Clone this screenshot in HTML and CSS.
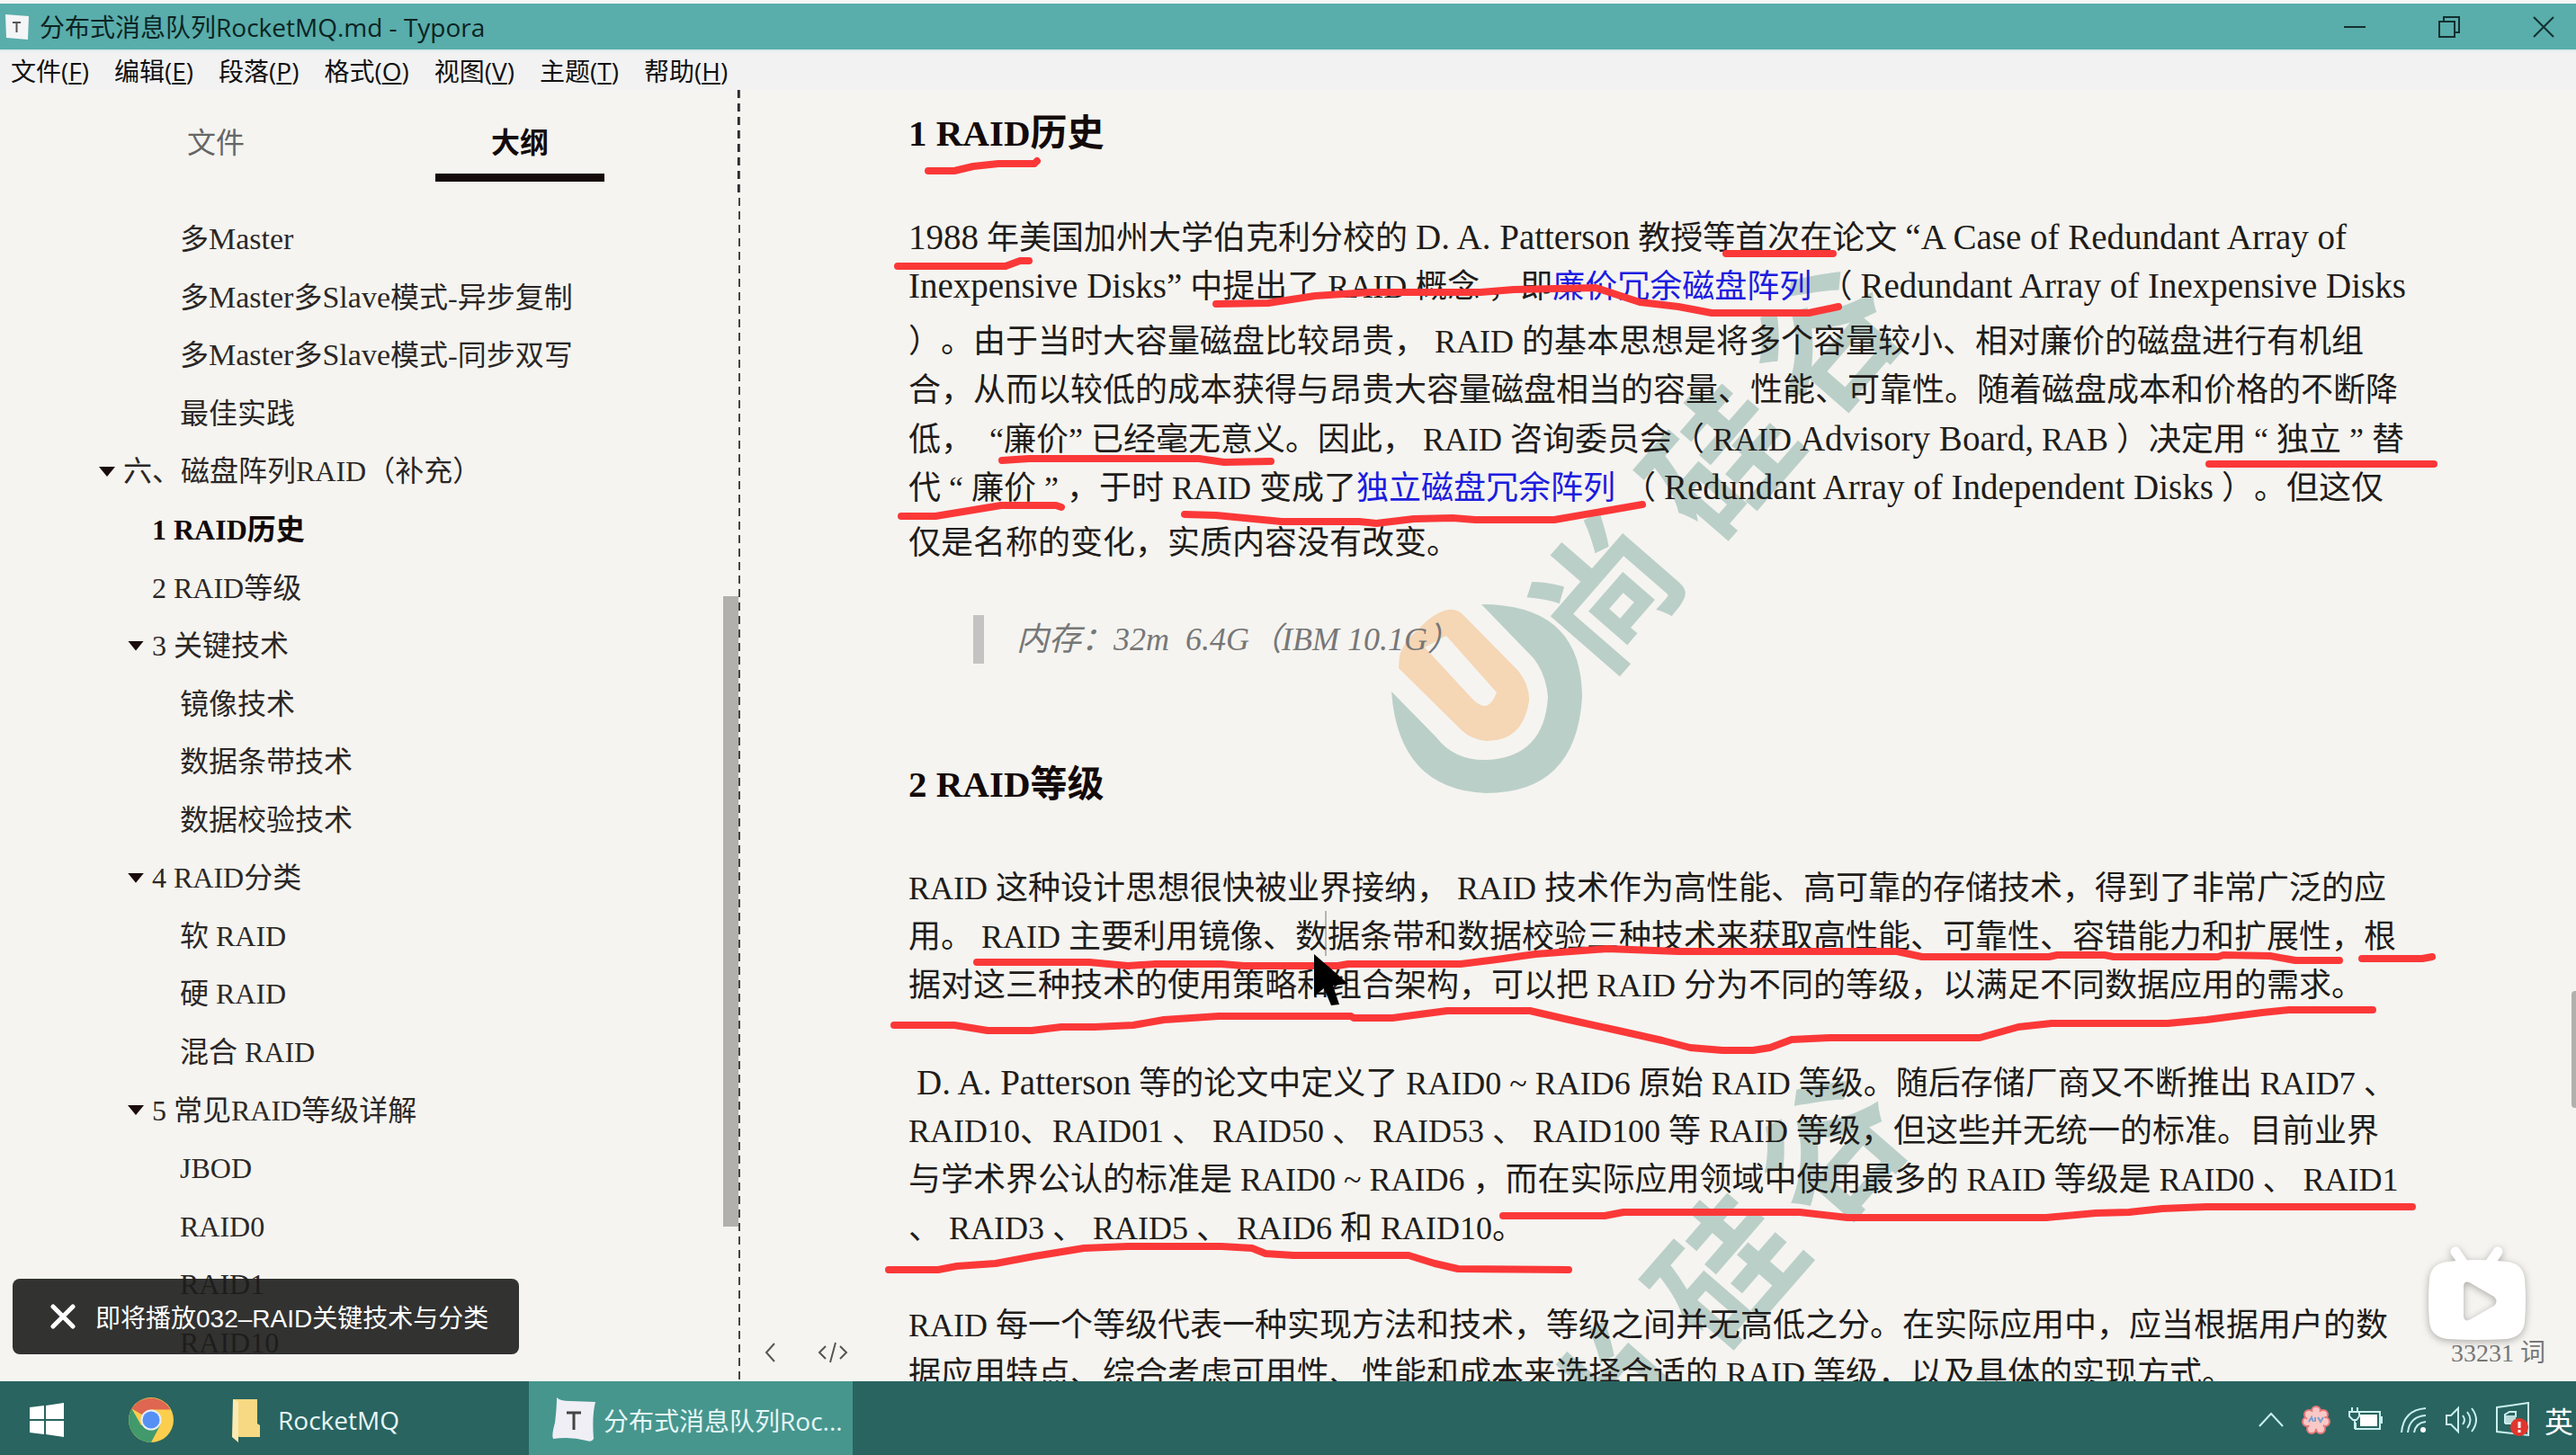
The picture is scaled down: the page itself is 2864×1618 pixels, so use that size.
FILE: index.html
```
<!DOCTYPE html>
<html lang="zh-CN">
<head>
  <meta charset="UTF-8" />
  <meta name="viewport" content="width=device-width, initial-scale=1.0" />
  <title>分布式消息队列RocketMQ.md - Typora</title>
  <link rel="stylesheet" href="styles.css">
</head>
<body>

<!-- ========= Title bar ========= -->
<header class="titlebar">
  <svg class="app-icon" viewBox="0 0 32 32"><path d="M3 2 L29 4 L28 30 L4 28 Z" fill="#f4f5f7"/><path d="M11 11 H20 M15.500 11 V22" stroke="#555" stroke-width="2" fill="none"/></svg>
  <h1>分布式消息队列RocketMQ.md - Typora</h1>
  <div class="win-buttons">
    <button aria-label="最小化"><svg viewBox="0 0 24 24"><path d="M0 12 H24"/></svg></button>
    <button aria-label="还原"><svg viewBox="0 0 24 24"><path d="M1 6 H18 V23 H1 Z M6 6 V1 H23 V18 H18"/></svg></button>
    <button aria-label="关闭"><svg viewBox="0 0 24 24"><path d="M1 1 L23 23 M23 1 L1 23"/></svg></button>
  </div>
</header>

<nav class="menubar">
  <button>文件(<u>F</u>)</button>
  <button>编辑(<u>E</u>)</button>
  <button>段落(<u>P</u>)</button>
  <button>格式(<u>O</u>)</button>
  <button>视图(<u>V</u>)</button>
  <button>主题(<u>T</u>)</button>
  <button>帮助(<u>H</u>)</button>
</nav>

<div class="workspace">
  <!-- ========= Sidebar ========= -->
  <aside class="sidebar">
    <div class="side-tabs">
      <button>文件</button>
      <button class="active">大纲</button>
    </div>
    <ul class="outline">
      <li class="lv3"><a href="#">多<span class="en">Master</span></a></li>
      <li class="lv3"><a href="#">多<span class="en">Master</span>多<span class="en">Slave</span>模式-异步复制</a></li>
      <li class="lv3"><a href="#">多<span class="en">Master</span>多<span class="en">Slave</span>模式-同步双写</a></li>
      <li class="lv3"><a href="#">最佳实践</a></li>
      <li class="lv1 open"><a href="#">六、磁盘阵列RAID（补充）</a></li>
      <li class="lv2 current"><a href="#history">1 RAID历史</a></li>
      <li class="lv2"><a href="#levels">2 RAID等级</a></li>
      <li class="lv2 open"><a href="#">3 关键技术</a></li>
      <li class="lv3"><a href="#">镜像技术</a></li>
      <li class="lv3"><a href="#">数据条带技术</a></li>
      <li class="lv3"><a href="#">数据校验技术</a></li>
      <li class="lv2 open"><a href="#">4 RAID分类</a></li>
      <li class="lv3"><a href="#">软 RAID</a></li>
      <li class="lv3"><a href="#">硬 RAID</a></li>
      <li class="lv3"><a href="#">混合 RAID</a></li>
      <li class="lv2 open"><a href="#">5 常见RAID等级详解</a></li>
      <li class="lv3"><a href="#">JBOD</a></li>
      <li class="lv3"><a href="#">RAID0</a></li>
      <li class="lv3"><a href="#">RAID1</a></li>
      <li class="lv3"><a href="#">RAID10</a></li>
    </ul>
    <div class="side-scroll"></div>
  </aside>

  <!-- ========= Document ========= -->
  <main class="editor">
    <h2 id="history">1 RAID历史</h2>
    <p>
      <span class="ln"><span class="en">1988</span> 年美国加州大学伯克利分校的 <span class="en">D. A. Patterson</span> 教授等首次在论文 <span class="en">“A Case of Redundant Array of</span></span>
      <span class="ln"><span class="en">Inexpensive Disks”</span> 中提出了 RAID 概念 ，即<b class="key">廉价冗余磁盘阵列</b> （ <span class="en">Redundant Array of Inexpensive Disks</span></span>
      <span class="ln tall">）。由于当时大容量磁盘比较昂贵， RAID 的基本思想是将多个容量较小、相对廉价的磁盘进行有机组</span>
      <span class="ln">合，从而以较低的成本获得与昂贵大容量磁盘相当的容量、性能、可靠性。随着磁盘成本和价格的不断降</span>
      <span class="ln">低，&nbsp; “廉价” 已经毫无意义。因此， RAID 咨询委员会（ RAID <span class="en">Advisory Board,</span> RAB ）决定用 “ 独立 ” 替</span>
      <span class="ln">代 “ 廉价 ” ，于时 RAID 变成了<b class="key">独立磁盘冗余阵列</b> （ <span class="en">Redundant Array of Independent Disks</span> ）。但这仅</span>
      <span class="ln tall">仅是名称的变化，实质内容没有改变。</span>
    </p>
    <blockquote>内存：32m&nbsp; 6.4G（IBM 10.1G）</blockquote>
    <h2 id="levels" class="spaced">2 RAID等级</h2>
    <p>
      <span class="ln">RAID 这种设计思想很快被业界接纳， RAID 技术作为高性能、高可靠的存储技术，得到了非常广泛的应</span>
      <span class="ln">用。 RAID 主要利用镜像、数据条带和数据校验三种技术来获取高性能、可靠性、容错能力和扩展性，根</span>
      <span class="ln">据对这三种技术的使用策略和组合架构，可以把 RAID 分为不同的等级，以满足不同数据应用的需求。</span>
    </p>
    <p>
      <span class="ln">&nbsp;<span class="en">D. A. Patterson</span> 等的论文中定义了 RAID0 ~ RAID6 原始 RAID 等级。随后存储厂商又不断推出 RAID7 、</span>
      <span class="ln">RAID10、RAID01 、 RAID50 、 RAID53 、 RAID100 等 RAID 等级，但这些并无统一的标准。目前业界</span>
      <span class="ln">与学术界公认的标准是 RAID0 ~ RAID6 ，而在实际应用领域中使用最多的 RAID 等级是 RAID0 、 RAID1</span>
      <span class="ln">、 RAID3 、 RAID5 、 RAID6 和 RAID10。</span>
    </p>
    <p>
      <span class="ln">RAID 每一个等级代表一种实现方法和技术，等级之间并无高低之分。在实际应用中，应当根据用户的数</span>
      <span class="ln">据应用特点、综合考虑可用性、性能和成本来选择合适的 RAID 等级，以及具体的实现方式。</span>
    </p>
    <div class="view-buttons">
      <button aria-label="收起侧栏"><svg width="14" height="24" viewBox="0 0 14 24"><path d="M12 2 L3 12 L12 22"/></svg></button>
      <button aria-label="源代码模式"><svg width="34" height="24" viewBox="0 0 34 24"><path d="M9 5 L2 12 L9 19 M25 5 L32 12 L25 19 M20 1 L14 23"/></svg></button>
    </div>
    <button class="word-count">33231 词</button>
    <div class="doc-scroll"></div>
  </main>
</div>

<!-- ========= Taskbar ========= -->
<footer class="taskbar">
  <button class="start" aria-label="开始">
    <svg width="38" height="38" viewBox="0 0 38 38"><path fill="#fff" d="M0 5 L16 3 V18 H0 Z M18 3 L38 0 V18 H18 Z M0 20 H16 V35 L0 33 Z M18 20 H38 V38 L18 35 Z"/></svg>
  </button>
  <button class="chrome" aria-label="Chrome">
    <svg width="50" height="50" viewBox="0 0 50 50">
      <circle cx="25" cy="25" r="25" fill="#fbce4e"/>
      <path d="M25 25 L3.500 12.500 A25 25 0 0 1 46.500 13.500 H25 Z" fill="#df6650"/>
      <path d="M3.500 12.500 A25 25 0 0 0 25 50 L35 31 L25 25 L14 31 Z" fill="#41996c"/>
      <circle cx="25" cy="25" r="11.500" fill="#e9eff2"/><circle cx="25" cy="25" r="9.500" fill="#5690f5"/>
    </svg>
  </button>
  <button class="task folder">
    <svg width="32" height="50" viewBox="0 0 32 50"><path d="M2 2 H29 V29 L32 31 V44 H9 L2 40 Z" fill="#f7d983"/><path d="M2 2 L8 5 V50 L1 44 Z" fill="#fdeab2"/></svg>
    RocketMQ
  </button>
  <button class="task current">
    <svg width="48" height="50" viewBox="0 0 48 50"><path d="M5 0 Q8 4 20 4 L48 5 Q44 20 46 46 Q44 50 38 48 Q20 43 1 46 Q-1 42 3 28 Q5 12 5 0 Z" fill="#efeff5"/><path d="M16 17 H32 M24 17 V36" stroke="#444" stroke-width="3" fill="none"/></svg>
    分布式消息队列Roc...
  </button>
  <div class="tray">
    <svg width="28" height="30" viewBox="0 0 28 30"><path d="M1 22 L14 8 L27 22" class="line"/></svg>
    <svg width="34" height="34" viewBox="0 0 34 34">
      <g fill="#f8c9c6" stroke="#e8777a" stroke-width="2"><circle cx="17" cy="7" r="5"/><circle cx="25" cy="11" r="5"/><circle cx="27" cy="19" r="5"/><circle cx="22" cy="27" r="5"/><circle cx="12" cy="27" r="5"/><circle cx="7" cy="19" r="5"/><circle cx="9" cy="11" r="5"/></g>
      <circle cx="17" cy="17" r="10" fill="#f8c9c6"/><path d="M9 19 L12 14 L14 19 M16 14 V19 M19 14 L22 19 L25 14" stroke="#7b9fd0" stroke-width="2" fill="none"/>
    </svg>
    <svg width="38" height="34" viewBox="0 0 38 34"><path d="M12 8 H35 V27 H8 V20 M35 14 H37 V20 H35 M4 3 V8 M10 3 V8 M1 8 H12 V13 L9 17 H5 L1 13 Z M7 17 V27" class="line"/><rect x="13" y="11" width="19" height="13" fill="#fff"/></svg>
    <svg width="32" height="34" viewBox="0 0 32 34"><path d="M2 31 Q4 6 29 4 M9 31 Q11 13 29 12 M16 31 Q18 20 29 19" class="line"/><circle cx="26" cy="28" r="3" fill="#fff"/></svg>
    <svg width="36" height="34" viewBox="0 0 36 34"><path d="M1 12 H6 L14 4 V30 L6 22 H1 Z M19 12 Q23 17 19 22 M24 8 Q31 17 24 26 M29 4 Q39 17 29 30" class="line"/></svg>
    <svg width="40" height="40" viewBox="0 0 40 40"><path d="M2 6 L37 1 V37 L2 33 Z M11 24 V14 L16 11 H23 V17 M11 24 H18" class="line"/><rect x="12" y="15" width="11" height="8" fill="#b9dcd8"/><circle cx="27" cy="28" r="10" fill="#e0362f"/><path d="M27 22 V29 M27 31 V34" stroke="#fff" stroke-width="3"/></svg>
    <span>英</span>
  </div>
</footer>

<!-- ========= Watermark (below the text) ========= -->
<svg class="watermark" viewBox="0 0 2864 1436">
  <defs>
    <g id="brand">
      <text x="-82" y="58">尚</text>
      <text x="112" y="58">硅</text>
      <text x="290" y="58">谷</text>
    </g>
  </defs>
  <!-- ring and inner U, rounded towards the lower right -->
  <g transform="translate(1547 570)">
    <path d="M0 99 L50 150 Q70 176 106 175 Q170 172 174 105 Q172 80 158 62 L100 2 Q212 2 212 106 Q205 212 105 212 Q8 208 0 99 Z" fill="#bbcfc9"/>
    <path d="M9 59 Q14 44 25 34 L40 20 Q66 -1 80 14 L141 76 Q154 93 153 110 Q146 154 106 154 Q88 152 78 142 L8 73 Z M37 50 L88 105 Q107 127 117 100 L61 37 Z" fill="#f5d6b5" fill-rule="evenodd"/>
  </g>
  <use href="#brand" transform="translate(1789 556) rotate(-49)"/>
  <use href="#brand" transform="translate(1795 1456) rotate(-49)"/>
</svg>

<!-- ========= Pen strokes and pointer ========= -->
<svg class="ink" viewBox="0 0 2864 1618">
  <polyline points="1032,190 1061,190 1082,185 1110,182 1150,182 1153,179"/>
  <polyline points="998,296 1118,296 1134,290 1144,290"/>
  <polyline points="1352,338 1410,337 1462,329 1523,325 1646,325 1683,322 1774,320 1823,336 1866,341 1903,348 2011,348 2044,341"/>
  <polyline points="1919,282 2038,282"/>
  <polyline points="1114,512 1144,510 1333,510 1361,514 1413,513"/>
  <polyline points="2456,516 2706,516"/>
  <polyline points="1002,574 1040,574 1113,562 1174,562 1180,564"/>
  <polyline points="1317,572 1352,573 1425,580 1511,580 1530,582 1572,577 1615,576 1640,578 1728,578 1826,561"/>
  <polyline points="1086,1070 1211,1070 1254,1074 1285,1072 1358,1072 1383,1074 1487,1074 1499,1072 1624,1072 1664,1067 1707,1061 1787,1055 1866,1058 2109,1058 2137,1064 2278,1064 2287,1062 2340,1062 2350,1064 2466,1064 2472,1062 2524,1063 2552,1068 2601,1068"/>
  <polyline points="2626,1066 2693,1066 2704,1064"/>
  <polyline points="994,1140 1061,1140 1098,1146 1147,1146 1180,1142 1217,1142 1260,1140 1294,1134 1355,1130 1502,1130 1505,1132 1548,1132 1609,1124 1701,1124 1740,1133 1799,1146 1848,1157 1879,1165 1915,1168 1949,1168 1968,1165 1992,1156 2035,1154 2201,1154 2244,1142 2281,1138 2410,1138 2453,1134 2515,1126 2545,1123 2638,1123"/>
  <polyline points="1671,1352 1784,1352 1805,1348 2001,1348 2054,1354 2275,1354 2330,1349 2367,1348 2404,1344 2453,1342 2682,1342"/>
  <polyline points="988,1412 1043,1412 1064,1408 1107,1405 1150,1397 1205,1388 1254,1386 1358,1386 1392,1388 1407,1394 1438,1396 1566,1396 1595,1405 1621,1411 1744,1412"/>
  <path class="pointer" d="M1461 1061 V1108 L1472 1099 L1480 1118 L1489 1117 L1482 1096 L1499 1094 Z"/>
  <path class="caret" d="M1474 1013 V1063"/>
</svg>

<div class="toast">
  <button aria-label="关闭"><svg width="28" height="28" viewBox="0 0 28 28"><path d="M3 3 L25 25 M25 3 L3 25"/></svg></button>
  <span>即将播放032–RAID关键技术与分类</span>
</div>

<button class="play" aria-label="播放">
  <svg width="110" height="106" viewBox="0 0 110 106">
    <path d="M31 6 L42 22 M78 6 L67 22" stroke="#fff" stroke-width="11" stroke-linecap="round"/>
    <path fill="#fff" fill-rule="evenodd" d="M22 17 Q54 13 88 17 Q106 19 108 36 Q110 60 108 84 Q106 101 88 103 Q54 105 22 103 Q4 101 2 84 Q0 60 2 36 Q4 19 22 17 Z M40 44 V78 Q41 85 48 81 L74 66 Q79 61 74 56 L48 41 Q41 37 40 44 Z"/>
  </svg>
</button>

</body>
</html>
```
FILE: styles.css
```
:root {
  --paper: #f5f4f0;
  --teal: #59adab;
  --taskbar: #296460;
  --ink-red: #fb3838;
  --serif: "Liberation Serif", "Noto Sans CJK SC", serif;
  --ui: "Open Sans", "Noto Sans CJK SC", sans-serif;
}

/* ===== Reset ===== */
*, *::before, *::after { box-sizing: border-box; }
body {
  margin: 0;
  height: 100vh;
  display: flex;
  flex-direction: column;
  overflow: hidden;
  position: relative;
  background: var(--paper);
  color: #1f1c1a;
  font-family: var(--serif);
  text-spacing-trim: space-all;
}
button {
  border: none;
  background: none;
  padding: 0;
  color: inherit;
  font: inherit;
  cursor: pointer;
}
svg { display: block; flex: none; }

/* ===== Title bar / menu ===== */
.titlebar {
  display: flex;
  align-items: center;
  height: 55px;
  padding-left: 3px;
  border-top: 4px solid #f5f6f5;
  background: var(--teal);
  color: #0c2423;
  font-family: var(--ui);
  overflow: hidden;
}
.titlebar h1 { margin: 0 0 0 9px; font-size: 28px; font-weight: 400; line-height: 50px; }
.app-icon { width: 32px; height: 32px; }
.win-buttons { display: flex; margin: 0 -16px 0 auto; }
.win-buttons button { width: 105px; height: 50px; display: flex; align-items: center; justify-content: center; }
.win-buttons svg { width: 24px; height: 24px; fill: none; stroke: #12302f; stroke-width: 2; }

.menubar {
  display: flex;
  gap: 28px;
  height: 45px;
  padding: 0 12px;
  border-top: 2px solid #dcebec;
  background: #f2f2f2;
  font-family: var(--ui);
  font-size: 28px;
  line-height: 44px;
  color: #111;
}

/* ===== Sidebar ===== */
.workspace { flex: 1; display: flex; min-height: 0; }
.sidebar {
  position: relative;
  width: 823px;
  display: flex;
  flex-direction: column;
  padding-bottom: 11px;
}
.sidebar::after, .side-tabs::after {
  content: "";
  position: absolute;
  top: 0;
  right: 0;
  bottom: 0;
  width: 2px;
  background: repeating-linear-gradient(#444 0 9px, transparent 9px 15px);
}
.side-tabs::after { bottom: auto; width: 3px; height: 115px; background: repeating-linear-gradient(#111 0 9px, transparent 9px 15px); }
.side-tabs { display: flex; height: 134px; padding-left: 146px; font-size: 32px; }
.side-tabs button {
  width: 188px;
  height: 102px;
  margin-right: 150px;
  padding-top: 18px;
  color: #666;
  border-bottom: 9px solid transparent;
}
.side-tabs .active { color: #140a0a; font-weight: 700; border-bottom-color: #140a0a; }

.outline {
  flex: 1;
  display: grid;
  grid-auto-rows: 1fr;
  margin: 0;
  padding: 0;
  list-style: none;
  font-size: 32px;
}
.outline li { display: flex; align-items: center; position: relative; white-space: nowrap; }
.outline a { color: #2b2726; text-decoration: none; line-height: 40px; }
.outline .en { font-size: 34px; }
.outline .lv1 { padding-left: 137px; }
.outline .lv2 { padding-left: 169px; }
.outline .lv3 { padding-left: 200px; }
.outline .current a { color: #120909; font-weight: 700; }
.outline .open::before {
  content: "";
  width: 18px;
  height: 11px;
  margin: 0 9px 0 -27px;
  background: #1a0c0c;
  clip-path: polygon(0 0, 100% 0, 50% 100%);
}
.side-scroll { position: absolute; right: 2px; top: 39.2%; width: 17px; height: 48.8%; background: #b1b0ac; }

/* ===== Document ===== */
.editor { flex: 1; position: relative; min-width: 0; padding: 18px 0 0 187px; overflow: hidden; font-size: 36px; line-height: 54px; }
.editor > h2, .editor > p, .editor > blockquote { position: relative; z-index: 2; }
h2 { margin: 0 0 59px; font-size: 41px; line-height: 60px; color: #140a0a; }
h2.spaced { margin-top: 104px; }
p { margin: 0 0 54px; }
.ln { display: block; height: 54px; white-space: nowrap; }
.ln.tall { height: 62px; padding-top: 8px; }
.en { font-size: 39px; }
.key { font-weight: 400; color: #1c1ce0; }
blockquote {
  margin: -1px 0 0 72px;
  padding-left: 36px;
  border-left: 12px solid #c4c3c1;
  color: #777;
  font-style: italic;
}
.view-buttons {
  position: absolute;
  left: 26px;
  bottom: 20px;
  display: flex;
  gap: 46px;
}
.view-buttons svg { fill: none; stroke: #555; stroke-width: 2; }
.word-count {
  position: absolute;
  right: 34px;
  bottom: 11px;
  font-size: 28px;
  line-height: 40px;
  color: #777;
}
.doc-scroll { position: absolute; right: 0; top: 69.8%; width: 5px; height: 9%; border-radius: 4px 0 0 4px; background: #b1b0ac; }

/* ===== Taskbar ===== */
.taskbar {
  position: relative;
  z-index: 3;
  display: flex;
  height: 82px;
  padding-left: 33px;
  background: var(--taskbar);
  color: #e6f7f6;
  font-family: var(--ui);
  font-size: 28px;
}
.taskbar button, .tray { display: flex; align-items: center; padding-top: 4px; white-space: nowrap; }
.taskbar .chrome { margin-left: 72px; }
.taskbar .folder { width: 331px; margin-left: 64px; gap: 20px; }
.taskbar .current { width: 360px; padding-left: 26px; gap: 9px; background: #46968e; }
.tray { gap: 19px; margin-left: auto; padding-right: 3px; }
.tray span { margin-left: -4px; font-size: 32px; color: #fff; }
.tray .line { fill: none; stroke: #c9f0ee; stroke-width: 2; }

/* ===== Overlays ===== */
.watermark { position: absolute; left: 0; top: 100px; width: 100%; z-index: 1; height: calc(100vh - 182px); overflow: hidden; pointer-events: none; }
.watermark text { font: 700 156px "Noto Sans CJK SC", sans-serif; fill: #bbcfc9; }
.ink { position: absolute; inset: 0; width: 100%; height: 100%; z-index: 4; pointer-events: none; }
.ink polyline { fill: none; stroke: var(--ink-red); stroke-width: 8; stroke-linecap: round; stroke-linejoin: round; }
.pointer { fill: #000; }
.caret { stroke: #777; stroke-width: 1; }

.toast {
  position: absolute;
  left: 14px;
  bottom: 112px;
  z-index: 5;
  display: flex;
  align-items: center;
  gap: 22px;
  height: 84px;
  padding: 0 34px 0 42px;
  border-radius: 8px;
  background: rgba(29, 29, 28, .9);
  color: #fff;
  font: 28px "Liberation Sans", "Noto Sans CJK SC", sans-serif;
}
.toast svg { fill: none; stroke: #fff; stroke-width: 5; stroke-linecap: round; }

.play { position: absolute; right: 55px; bottom: 126px; z-index: 5; filter: drop-shadow(0 2px 4px rgba(0, 0, 0, .3)); }
```
